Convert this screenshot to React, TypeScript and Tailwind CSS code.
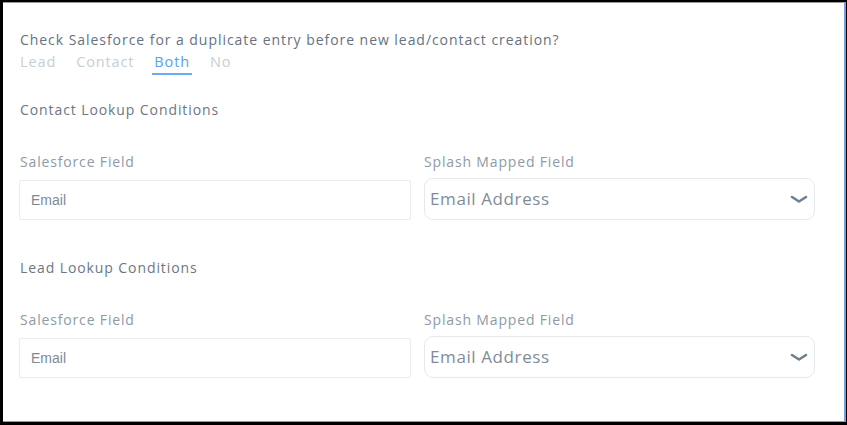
const font = { fontFamily: '"Open Sans", "Noto Sans", sans-serif' };

function Chevron() {
    return (
        <svg width="18" height="9" viewBox="0 0 18 9" fill="none" className="text-[#6e7f8e]">
            <path d="M2 2 L9 6.5 L16 2" stroke="currentColor" strokeWidth="2.6" strokeLinecap="round" strokeLinejoin="round" />
        </svg>
    );
}

function LookupSection({ title }: { title: string }) {
    return (
        <div className="flex flex-col">
            <div className="ml-[1px] h-5 text-[14px] leading-5 tracking-[0.065em] text-[#6b7785]">{title}</div>
            <div className="mt-[32px] grid grid-cols-[392px_391px] gap-x-[13px]">
                <div className="ml-[1px] h-5 text-[14px] leading-5 tracking-[0.06em] text-[#8e9aa6]">Salesforce Field</div>
                <div className="h-5 text-[14px] leading-5 tracking-[0.06em] text-[#8e9aa6]">Splash Mapped Field</div>
                <div className="mt-[8px] h-[40px] border border-[#ececec] rounded-[2px] flex items-center pl-[11px]">
                    <span className="text-[14px] text-[#7d8a96]" style={{ fontFamily: '"Liberation Sans", Arial, sans-serif' }}>
                        Email
                    </span>
                </div>
                <div className="mt-[6px] h-[42px] border border-[#e6e9ec] rounded-[9px] flex items-center justify-between pl-[5px] pr-[6px]">
                    <span className="text-[17px] tracking-[0.6px] text-[#7f8c98]">Email Address</span>
                    <Chevron />
                </div>
            </div>
        </div>
    );
}

export default function App() {
    const tabs = ['Lead', 'Contact', 'Both', 'No'];
    return (
        <div className="w-[847px] h-[425px] bg-black pl-[3px] pt-[2px]" style={font}>
            <div className="w-[843px] h-[420px] bg-white border-t border-b border-[#9b9b9b] border-r-2 border-r-[#6aa3e0] pl-[16px] pt-[27px]">
                <div className="ml-[1px] h-5 text-[14px] leading-5 tracking-[0.068em] text-[#66727f]">
                    Check Salesforce for a duplicate entry before new lead/contact creation?
                </div>
                <div className="ml-[1px] mt-[2px] flex gap-[20px]">
                    {tabs.map((t) => (
                        <span
                            key={t}
                            className={
                                t === 'Both'
                                    ? 'h-[23px] px-[2px] -mx-[2px] text-[14.5px] leading-5 tracking-[0.06em] text-[#5a9ff0] border-b-2 border-[#6aaaf5]'
                                    : 'h-[23px] text-[14.5px] leading-5 tracking-[0.06em] text-[#c6ced6]'
                            }
                        >
                            {t}
                        </span>
                    ))}
                </div>
                <div className="mt-[25px]">
                    <LookupSection title="Contact Lookup Conditions" />
                </div>
                <div className="mt-[38px]">
                    <LookupSection title="Lead Lookup Conditions" />
                </div>
            </div>
        </div>
    );
}
